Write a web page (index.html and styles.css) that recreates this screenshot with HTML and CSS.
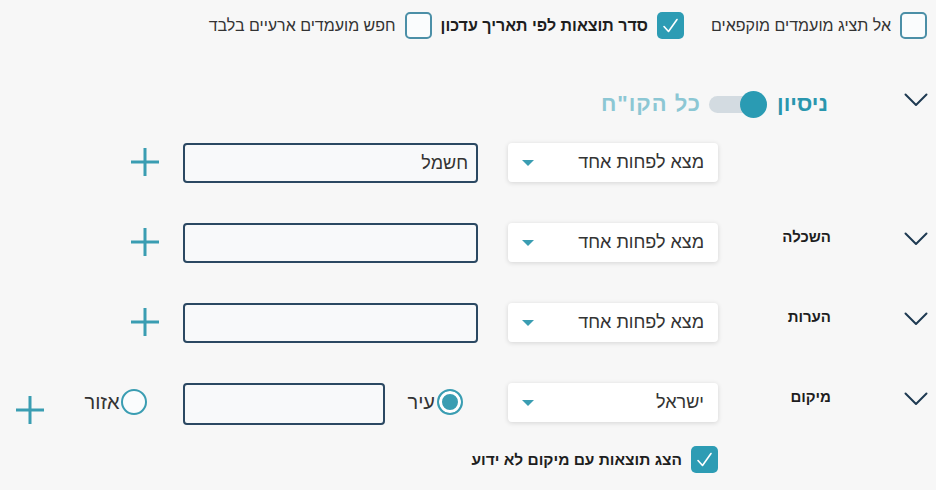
FILE: index.html
```html
<!DOCTYPE html>
<html lang="he" dir="rtl">
<head>
  <meta charset="UTF-8">
  <title>חיפוש מועמדים</title>
  <meta name="viewport" content="width=device-width, initial-scale=1.0">
  <link rel="stylesheet" href="styles.css">
</head>
<body>

<div class="options">
  <label class="check">
    <span class="box"></span>
    <span>אל תציג מועמדים מוקפאים</span>
  </label>
  <label class="check bold">
    <span class="box on"><svg viewBox="0 0 27 27" width="27" height="27"><path d="M7 14.5l4.5 5L20 7.5" fill="none" stroke="#fff" stroke-width="1.6" stroke-linecap="round" stroke-linejoin="round"/></svg></span>
    <span>סדר תוצאות לפי תאריך עדכון</span>
  </label>
  <label class="check">
    <span class="box"></span>
    <span>חפש מועמדים ארעיים בלבד</span>
  </label>
</div>

<section class="filters">
  <div class="row head">
    <span class="chev"><svg viewBox="0 0 24 14" width="24" height="14"><path d="M1.5 1.5L12 12 22.5 1.5" fill="none" stroke="#1f3a52" stroke-width="2" stroke-linecap="round" stroke-linejoin="round"/></svg></span>
    <div class="title">
      <span class="title-on">ניסיון</span>
      <span class="toggle"><span class="knob"></span></span>
      <span class="title-off">כל הקו"ח</span>
    </div>
  </div>

  <div class="row">
    <span class="chev"></span>
    <span class="label"></span>
    <div class="select"><span>מצא לפחות אחד</span><span class="tri"></span></div>
    <input class="field" type="text" value="חשמל">
    <span class="plus"><svg viewBox="0 0 30 30" width="30" height="30"><path d="M15 1v28M1 15h28" stroke="#3a9db2" stroke-width="3"/></svg></span>
  </div>

  <div class="row">
    <span class="chev"><svg viewBox="0 0 24 14" width="24" height="14"><path d="M1.5 1.5L12 12 22.5 1.5" fill="none" stroke="#1f3a52" stroke-width="2" stroke-linecap="round" stroke-linejoin="round"/></svg></span>
    <span class="label">השכלה</span>
    <div class="select"><span>מצא לפחות אחד</span><span class="tri"></span></div>
    <input class="field" type="text" value="">
    <span class="plus"><svg viewBox="0 0 30 30" width="30" height="30"><path d="M15 1v28M1 15h28" stroke="#3a9db2" stroke-width="3"/></svg></span>
  </div>

  <div class="row">
    <span class="chev"><svg viewBox="0 0 24 14" width="24" height="14"><path d="M1.5 1.5L12 12 22.5 1.5" fill="none" stroke="#1f3a52" stroke-width="2" stroke-linecap="round" stroke-linejoin="round"/></svg></span>
    <span class="label">הערות</span>
    <div class="select"><span>מצא לפחות אחד</span><span class="tri"></span></div>
    <input class="field" type="text" value="">
    <span class="plus"><svg viewBox="0 0 30 30" width="30" height="30"><path d="M15 1v28M1 15h28" stroke="#3a9db2" stroke-width="3"/></svg></span>
  </div>

  <div class="row">
    <span class="chev"><svg viewBox="0 0 24 14" width="24" height="14"><path d="M1.5 1.5L12 12 22.5 1.5" fill="none" stroke="#1f3a52" stroke-width="2" stroke-linecap="round" stroke-linejoin="round"/></svg></span>
    <span class="label">מיקום</span>
    <div class="select"><span>ישראל</span><span class="tri"></span></div>
    <label class="radio first"><span class="dot on"></span><span>עיר</span></label>
    <input class="field short" type="text" value="">
    <label class="radio"><span class="dot"></span><span>אזור</span></label>
    <span class="plus low"><svg viewBox="0 0 30 30" width="30" height="30"><path d="M15 1v28M1 15h28" stroke="#3a9db2" stroke-width="3"/></svg></span>
  </div>

  <label class="check bold unknown">
    <span class="box on"><svg viewBox="0 0 27 27" width="27" height="27"><path d="M7 14.5l4.5 5L20 7.5" fill="none" stroke="#fff" stroke-width="1.6" stroke-linecap="round" stroke-linejoin="round"/></svg></span>
    <span>הצג תוצאות עם מיקום לא ידוע</span>
  </label>
</section>

</body>
</html>
```

FILE: styles.css
```css
* {
  box-sizing: border-box;
  margin: 0;
  padding: 0;
}

body {
  font-family: 'Liberation Sans', 'DejaVu Sans', sans-serif;
  background: #f7f7f7;
  color: #2a2a2a;
  width: 936px;
  height: 490px;
  overflow: hidden;
}

.options {
  display: flex;
  align-items: center;
  padding: 12px 9px 0 0;
}

.options .check {
  margin-left: 27px;
}

.options .check.bold {
  margin-left: 9px;
}

.check {
  display: flex;
  align-items: center;
  gap: 9px;
  font-size: 16px;
  color: #333;
}

.check.bold {
  font-weight: bold;
  font-size: 16px;
  color: #1e1e1e;
}

.box {
  width: 27px;
  height: 27px;
  border: 2px solid #4b8fa7;
  border-radius: 5px;
  background: #fafcfd;
  flex-shrink: 0;
}

.box.on {
  border: none;
  background: #2d9cb4;
}

.box svg {
  display: block;
}

.row {
  display: flex;
  align-items: flex-start;
  padding-right: 8px;
  margin-top: 40px;
  height: 40px;
}

.row.head {
  margin-top: 51px;
  height: 28px;
  align-items: center;
}

.row.head + .row {
  margin-top: 25px;
}

.chev {
  width: 24px;
  height: 14px;
  margin-top: 9px;
  flex-shrink: 0;
}

.row.head .chev {
  margin-top: -9px;
}

.chev svg {
  display: block;
}

.title {
  display: flex;
  align-items: center;
  margin-right: 76px;
  font-size: 22px;
  font-weight: bold;
}

.title-on {
  color: #2a96ae;
}

.title-off {
  color: #8cc7d4;
  letter-spacing: 1px;
}

.toggle {
  position: relative;
  width: 58px;
  height: 17px;
  margin: 0 10px 0 8px;
  background: #d3dbe1;
  border-radius: 9px;
}

.knob {
  position: absolute;
  right: 0;
  top: -5px;
  width: 27px;
  height: 27px;
  border-radius: 50%;
  background: #2a9bb3;
}

.label {
  width: 113px;
  margin-right: 73px;
  padding-top: 5px;
  font-size: 15px;
  font-weight: bold;
  color: #1e1e1e;
}

.select {
  width: 210px;
  height: 39px;
  display: flex;
  align-items: center;
  justify-content: space-between;
  padding: 0 14px;
  background: #fff;
  border-radius: 4px;
  box-shadow: 0 1px 5px rgba(0, 0, 0, 0.14);
  font-size: 18px;
  color: #333;
}

.tri {
  width: 0;
  height: 0;
  border-left: 6px solid transparent;
  border-right: 6px solid transparent;
  border-top: 6px solid #3a9db2;
}

.field {
  width: 295px;
  height: 40px;
  margin-right: 30px;
  padding: 0 8px;
  border: 2px solid #2b4862;
  border-radius: 4px;
  background: #f8f9fa;
  font-family: inherit;
  font-size: 18px;
  color: #333;
  text-align: right;
  direction: rtl;
}

.field.short {
  width: 202px;
  height: 42px;
  margin-right: 22px;
}

.plus {
  width: 30px;
  height: 30px;
  margin: 4px 23px 0 0;
}

.plus.low {
  margin: 12px 40px 0 0;
}

.plus svg {
  display: block;
}

.radio {
  display: flex;
  align-items: center;
  gap: 2px;
  margin: 6px 36px 0 0;
  font-size: 20px;
  color: #333;
}

.radio.first {
  margin-right: 45px;
}

.dot {
  width: 26px;
  height: 26px;
  border: 2.5px solid #3a9db2;
  border-radius: 50%;
  background: #fafcfd;
  flex-shrink: 0;
}

.dot.on {
  background: #3a9db2;
  box-shadow: inset 0 0 0 3px #fff;
}

.check.unknown {
  margin: 23px 218px 0 0;
  width: max-content;
  font-size: 15.5px;
}
```
